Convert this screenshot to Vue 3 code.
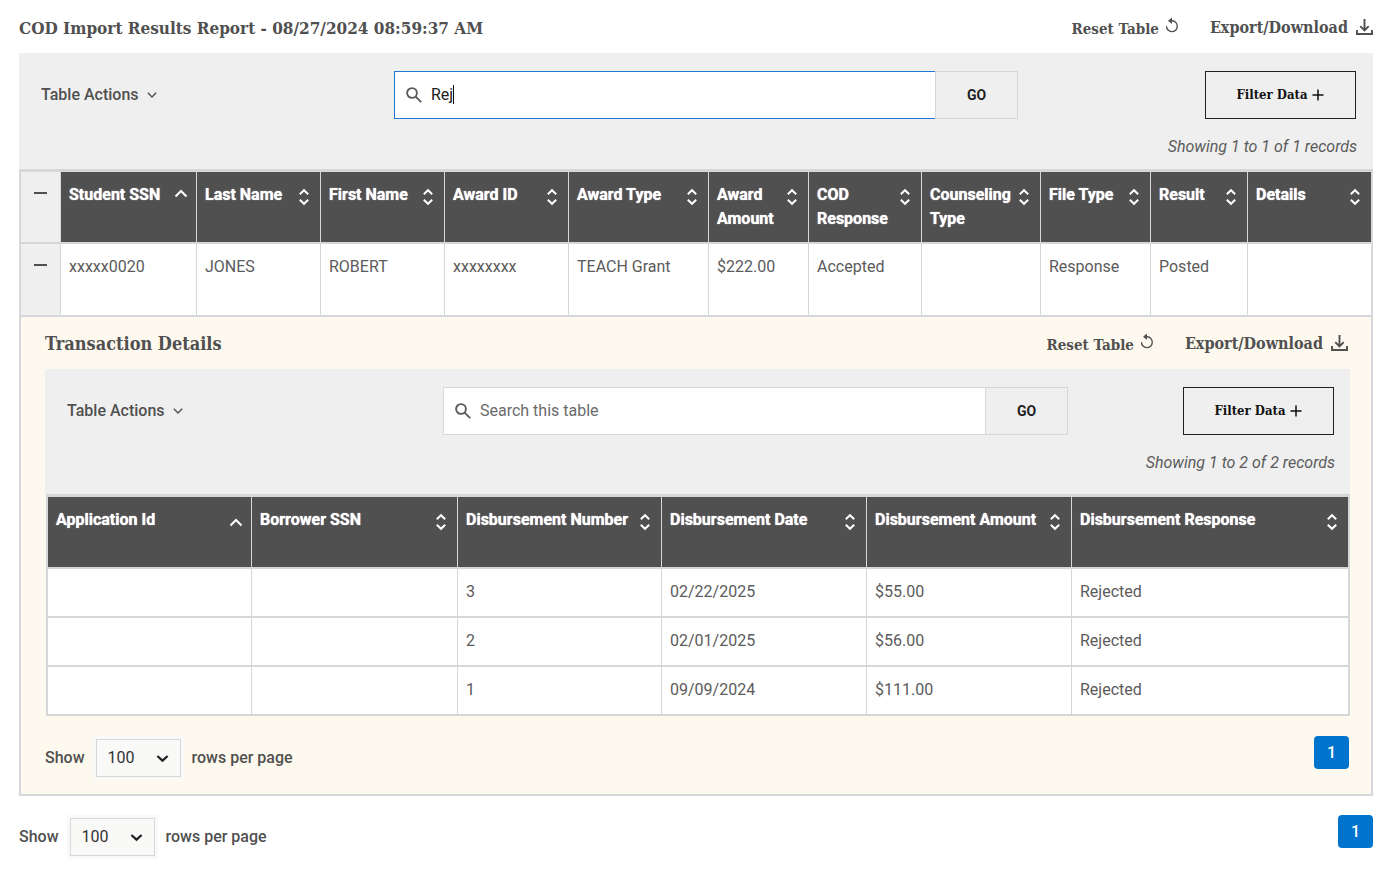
<script setup>
import { ref } from 'vue'

const query = ref('Rej')
const detailQuery = ref('')
const pageSize = ref('100')
const detailPageSize = ref('100')

const columns = [
  { label: 'Student SSN', width: 136, sort: 'asc' },
  { label: 'Last Name', width: 124 },
  { label: 'First Name', width: 124 },
  { label: 'Award ID', width: 124 },
  { label: 'Award Type', width: 140 },
  { label: 'Award Amount', width: 100 },
  { label: 'COD Response', width: 113 },
  { label: 'Counseling Type', width: 119 },
  { label: 'File Type', width: 110 },
  { label: 'Result', width: 97 },
  { label: 'Details', width: 123 }
]
const record = ['xxxxx0020', 'JONES', 'ROBERT', 'xxxxxxxx', 'TEACH Grant', '$222.00', 'Accepted', '', 'Response', 'Posted', '']

const detailColumns = [
  { label: 'Application Id', width: 204, sort: 'asc' },
  { label: 'Borrower SSN', width: 206 },
  { label: 'Disbursement Number', width: 204 },
  { label: 'Disbursement Date', width: 205 },
  { label: 'Disbursement Amount', width: 205 },
  { label: 'Disbursement Response', width: 276 }
]
const detailRows = [
  ['', '', '3', '02/22/2025', '$55.00', 'Rejected'],
  ['', '', '2', '02/01/2025', '$56.00', 'Rejected'],
  ['', '', '1', '09/09/2024', '$111.00', 'Rejected']
]
</script>

<template>
  <main class="page">
    <header class="titlebar">
      <h1 class="title">COD Import Results Report - 08/27/2024 08:59:37 AM</h1>
      <div class="links">
        <button class="link reset" type="button">
          Reset Table
          <svg class="reset-icon" viewBox="0 0 14 16" aria-hidden="true"><path d="M4.5 3.8H7.3A5.4 5.4 0 1 1 1.5 9.2" /><path class="solid" d="M3 3.8 7 .6V7z" /></svg>
        </button>
        <button class="link" type="button">
          Export/Download
          <svg class="export-icon" viewBox="0 0 17 17" aria-hidden="true"><path d="M8.5 0v11M4.3 7.2l4.2 4.2 4.2-4.2M1 11v4h15v-4" /></svg>
        </button>
      </div>
    </header>

    <section class="toolbar">
      <button class="actions" type="button">
        Table Actions
        <svg class="chevron" viewBox="0 0 10 6" aria-hidden="true"><path d="M.8.8 5 5 9.2.8" /></svg>
      </button>
      <form class="search active" @submit.prevent>
        <div class="field">
          <svg class="glass" viewBox="0 0 16 16" aria-hidden="true"><circle cx="6" cy="6" r="4.9" /><path d="m9.6 9.6 5.6 5.6" /></svg>
          <input v-model="query" type="text" aria-label="Search report" />
          <span class="caret"></span>
        </div>
        <button class="go" type="submit">GO</button>
      </form>
      <button class="filter" type="button">
        Filter Data
        <svg viewBox="0 0 12 12" aria-hidden="true"><path d="M6 .5v11M.5 6h11" /></svg>
      </button>
      <p class="records">Showing 1 to 1 of 1 records</p>
    </section>

    <table class="grid main-grid">
      <colgroup>
        <col :style="{ width: '40px' }" />
        <col v-for="c in columns" :key="c.label" :style="{ width: c.width + 'px' }" />
      </colgroup>
      <thead>
        <tr>
          <td class="toggle"><button type="button" aria-label="Collapse all"><span></span></button></td>
          <th v-for="c in columns" :key="c.label" scope="col">
            <div class="head">
              <span>{{ c.label }}</span>
              <svg v-if="c.sort" class="asc" viewBox="0 0 14 9" aria-hidden="true"><path d="m1.5 7.5 5.5-5.5 5.5 5.5" /></svg>
              <svg v-else class="both" viewBox="0 0 10 16" aria-hidden="true"><path d="m.8 5.2 4.2-4 4.2 4M.8 10.8l4.2 4 4.2-4" /></svg>
            </div>
          </th>
        </tr>
      </thead>
      <tbody>
        <tr>
          <td class="toggle"><button type="button" aria-label="Collapse row"><span></span></button></td>
          <td v-for="(v, i) in record" :key="i">{{ v }}</td>
        </tr>
        <tr>
          <td class="detail" colspan="12">
            <header class="titlebar">
              <h2 class="title">Transaction Details</h2>
              <div class="links">
                <button class="link reset" type="button">
                  Reset Table
                  <svg class="reset-icon" viewBox="0 0 14 16" aria-hidden="true"><path d="M4.5 3.8H7.3A5.4 5.4 0 1 1 1.5 9.2" /><path class="solid" d="M3 3.8 7 .6V7z" /></svg>
                </button>
                <button class="link" type="button">
                  Export/Download
                  <svg class="export-icon" viewBox="0 0 17 17" aria-hidden="true"><path d="M8.5 0v11M4.3 7.2l4.2 4.2 4.2-4.2M1 11v4h15v-4" /></svg>
                </button>
              </div>
            </header>

            <section class="toolbar">
              <button class="actions" type="button">
                Table Actions
                <svg class="chevron" viewBox="0 0 10 6" aria-hidden="true"><path d="M.8.8 5 5 9.2.8" /></svg>
              </button>
              <form class="search" @submit.prevent>
                <div class="field">
                  <svg class="glass" viewBox="0 0 16 16" aria-hidden="true"><circle cx="6" cy="6" r="4.9" /><path d="m9.6 9.6 5.6 5.6" /></svg>
                  <input v-model="detailQuery" type="text" aria-label="Search transactions" placeholder="Search this table" />
                </div>
                <button class="go" type="submit">GO</button>
              </form>
              <button class="filter" type="button">
                Filter Data
                <svg viewBox="0 0 12 12" aria-hidden="true"><path d="M6 .5v11M.5 6h11" /></svg>
              </button>
              <p class="records">Showing 1 to 2 of 2 records</p>
            </section>

            <table class="grid sub-grid">
              <colgroup>
                <col v-for="c in detailColumns" :key="c.label" :style="{ width: c.width + 'px' }" />
              </colgroup>
              <thead>
                <tr>
                  <th v-for="c in detailColumns" :key="c.label" scope="col">
                    <div class="head">
                      <span>{{ c.label }}</span>
                      <svg v-if="c.sort" class="asc" viewBox="0 0 14 9" aria-hidden="true"><path d="m1.5 7.5 5.5-5.5 5.5 5.5" /></svg>
                      <svg v-else class="both" viewBox="0 0 10 16" aria-hidden="true"><path d="m.8 5.2 4.2-4 4.2 4M.8 10.8l4.2 4 4.2-4" /></svg>
                    </div>
                  </th>
                </tr>
              </thead>
              <tbody>
                <tr v-for="(row, r) in detailRows" :key="r">
                  <td v-for="(v, i) in row" :key="i">{{ v }}</td>
                </tr>
              </tbody>
            </table>

            <footer class="pager">
              <label for="detail-size">Show</label>
              <div class="select">
                <select id="detail-size" v-model="detailPageSize"><option>100</option></select>
                <svg viewBox="0 0 14 9" aria-hidden="true"><path d="m1.5 1.8 5.5 5 5.5-5" /></svg>
              </div>
              <span>rows per page</span>
              <button class="current" type="button">1</button>
            </footer>
          </td>
        </tr>
      </tbody>
    </table>

    <footer class="pager outer">
      <label for="size">Show</label>
      <div class="select">
        <select id="size" v-model="pageSize"><option>100</option></select>
        <svg viewBox="0 0 14 9" aria-hidden="true"><path d="m1.5 1.8 5.5 5 5.5-5" /></svg>
      </div>
      <span>rows per page</span>
      <button class="current" type="button">1</button>
    </footer>
  </main>
</template>

<style>
body {
  background: #fff;
}
</style>

<style scoped>
* {
  box-sizing: border-box;
}
.page {
  padding: 0 10px 8px 19px;
  font: 400 16px/22px Roboto, 'Liberation Sans', sans-serif;
  color: #5b5b5b;
}
button,
input,
select {
  font: inherit;
  color: inherit;
  margin: 0;
  padding: 0;
  border: 0;
  border-radius: 0;
  background: none;
  outline: 0;
}
svg {
  display: block;
  flex: none;
  fill: none;
  stroke: currentColor;
  overflow: visible;
}
.titlebar {
  display: flex;
  justify-content: space-between;
  align-items: center;
  height: 53px;
  padding-top: 2px;
}
.title {
  margin: 0;
  font: 700 17px/24px 'Roboto Slab', 'DejaVu Serif Condensed', 'DejaVu Serif', serif;
  color: #505050;
}
.detail .title {
  font-size: 18px;
}
.links {
  display: flex;
  align-items: center;
  gap: 31px;
}
.link {
  display: flex;
  align-items: center;
  gap: 8px;
  font: 700 16px/22px 'Roboto Slab', 'DejaVu Serif Condensed', 'DejaVu Serif', serif;
  color: #505050;
}
.reset {
  gap: 6px;
  padding-top: 3px;
  font-size: 15px;
}
.reset-icon {
  width: 14px;
  height: 16px;
  margin-bottom: 8px;
  stroke-width: 1.4;
}
.reset-icon .solid {
  fill: currentColor;
  stroke: none;
}
.export-icon {
  width: 17px;
  height: 17px;
  stroke-width: 1.9;
}
.toolbar {
  display: grid;
  grid-template-columns: 375fr 624fr 355fr;
  grid-template-rows: 48px 22px;
  row-gap: 17px;
  padding-top: 18px;
  height: 116px;
  background: #efefef;
}
.actions {
  display: flex;
  align-items: center;
  justify-self: start;
  gap: 8px;
  padding-left: 22px;
  font-weight: 500;
  color: #505050;
}
.chevron {
  width: 10px;
  height: 6px;
  stroke-width: 1.4;
}
.search {
  display: flex;
}
.field {
  position: relative;
  flex: 1;
  display: flex;
  align-items: center;
  gap: 9px;
  padding-left: 11px;
  border: 1px solid #d6d7d9;
  border-right: 0;
  background: #fff;
}
.active .field {
  border-color: #2278cf;
}
.glass {
  width: 16px;
  height: 16px;
  stroke: #5b5b5b;
  stroke-width: 1.9;
}
.field input {
  flex: 1;
  min-width: 0;
  height: 46px;
  padding-bottom: 2px;
  color: #212121;
  caret-color: transparent;
}
.field input::placeholder {
  color: #6b6b6b;
  opacity: 1;
}
.caret {
  position: absolute;
  left: 58px;
  top: 13px;
  width: 1px;
  height: 19px;
  background: #111;
}
.go {
  width: 83px;
  border: 1px solid #d6d7d9;
  font: 700 14px/20px Roboto, 'Liberation Sans', sans-serif;
  color: #212121;
}
.filter {
  justify-self: end;
  display: flex;
  align-items: center;
  justify-content: center;
  gap: 5px;
  width: 151px;
  margin-right: 17px;
  border: 1px solid #212121;
  font: 700 13px/20px 'Roboto Slab', 'DejaVu Serif Condensed', 'DejaVu Serif', serif;
  color: #111;
}
.filter svg {
  width: 12px;
  height: 12px;
  stroke-width: 1.5;
}
.records {
  grid-column: 1 / -1;
  justify-self: end;
  margin: 0 16px 0 0;
  font-style: italic;
}
.grid {
  width: 100%;
  table-layout: fixed;
  border: 2px solid #d6d7d9;
  border-width: 3px 2px 0;
  border-collapse: separate;
  border-spacing: 0;
}
.grid th,
.grid td {
  padding: 12px 8px 0;
  border-right: 1px solid #d6d7d9;
  border-bottom: 2px solid #d6d7d9;
  background: #fff;
  vertical-align: top;
  text-align: left;
}
.grid tr > :last-child {
  border-right: 0;
}
.grid th {
  height: 72px;
  padding-top: 11px;
  background: #505050;
  color: #fff;
  font-weight: 700;
  text-shadow: 0 0 1px #fff;
}
.main-grid > tbody > tr:first-child > td {
  height: 73px;
}
.head {
  display: flex;
  justify-content: space-between;
  line-height: 24px;
}
.asc {
  width: 14px;
  height: 9px;
  margin-top: 6px;
  stroke-width: 2;
}
.both {
  width: 10px;
  height: 16px;
  margin: 6px 3px 0 0;
  stroke-width: 2;
}
.grid .toggle {
  padding: 20px 0 0;
  background: #efefef;
  text-align: center;
}
.toggle button {
  display: block;
  margin: 0 auto;
}
.toggle span {
  display: block;
  width: 13px;
  height: 2px;
  background: #505050;
}
.grid .detail {
  padding: 0 21px 15px 24px;
  background: #fef9ee;
}
.detail .titlebar {
  height: 52px;
  padding: 1px 2px 0 0;
}
.detail .toolbar {
  grid-template-columns: 398fr 625fr 282fr;
  height: 125px;
}
.detail .filter {
  margin-right: 16px;
}
.detail .records {
  margin-right: 15px;
}
.sub-grid {
  width: auto;
  min-width: calc(100% - 1px);
  margin-left: 1px;
}
.sub-grid td {
  height: 49px;
}
.sub-grid .asc {
  margin-top: 10px;
}
.pager {
  display: flex;
  align-items: center;
  gap: 11px;
  margin: 20px 1px 0 0;
  font-weight: 500;
  color: #505050;
}
.pager.outer {
  margin: 19px 0 0;
}
.select {
  position: relative;
  width: 85px;
  height: 38px;
  box-shadow: 0 0 0 3px #f9f9f8;
}
.select select {
  width: 100%;
  height: 100%;
  padding: 0 11px;
  border: 1px solid #d6d7d9;
  background: #f9f9f8;
  color: #333;
  font-weight: 400;
  appearance: none;
}
.select svg {
  position: absolute;
  right: 12px;
  top: 15px;
  width: 13px;
  height: 9px;
  stroke: #212121;
  stroke-width: 2.4;
  pointer-events: none;
}
.current {
  width: 35px;
  height: 33px;
  margin-left: auto;
  margin-bottom: 10px;
  border-radius: 4px;
  background: #0074cc;
  color: #fff;
}
</style>
